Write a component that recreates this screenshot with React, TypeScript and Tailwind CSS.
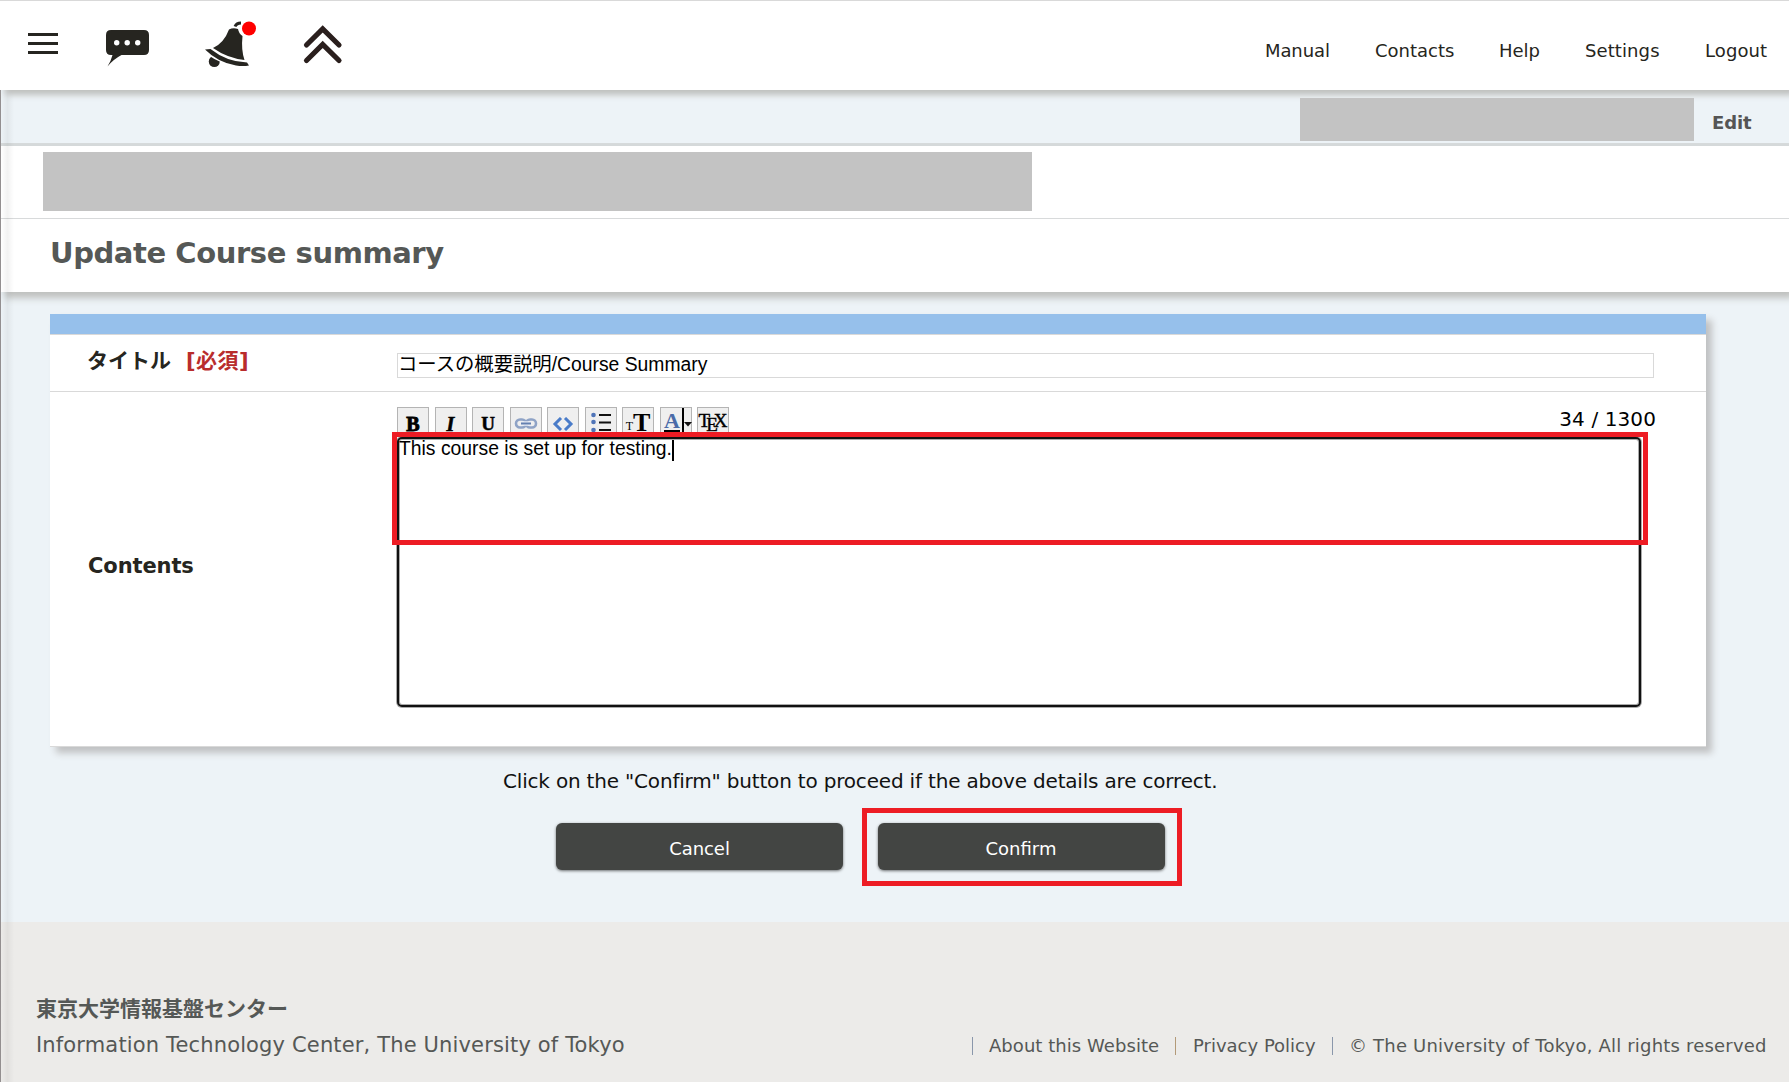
import React from "react";

const nav = [
  { label: "Manual", cls: "w-[65px] mr-[45px] tracking-[-0.1px]" },
  { label: "Contacts", cls: "w-[80px] mr-[44px]" },
  { label: "Help", cls: "w-[40px] mr-[46px]" },
  { label: "Settings", cls: "w-[74px] mr-[46px] tracking-[0.1px]" },
  { label: "Logout", cls: "w-[66px] tracking-[0.1px]" },
];

function ToolButton({ children }: { children: React.ReactNode }) {
  return (
    <button className="relative flex h-[32px] w-[32px] shrink-0 items-start justify-center border border-[#b4b4b4] bg-[#efefef] pt-[4px]">
      {children}
    </button>
  );
}

function Toolbar() {
  const serif = "font-['Liberation_Serif',serif] text-black";
  return (
    <div className="flex gap-[5.5px]">
      <ToolButton>
        <span className={`${serif} text-[20px] leading-[24px] font-bold [-webkit-text-stroke:0.9px_black]`}>B</span>
      </ToolButton>
      <ToolButton>
        <span className={`${serif} text-[20px] leading-[24px] font-bold italic [-webkit-text-stroke:0.6px_black]`}>I</span>
      </ToolButton>
      <ToolButton>
        <span className={`${serif} text-[19px] leading-[24px] font-bold [-webkit-text-stroke:0.5px_black]`}>U</span>
      </ToolButton>
      <ToolButton>
        <svg className="mt-[5px]" width="24" height="14" viewBox="0 0 24 14" fill="none">
          <rect x="2" y="2.5" width="10" height="8" rx="4" stroke="#8fa3c6" strokeWidth="2.6" />
          <rect x="12" y="2.5" width="10" height="8" rx="4" stroke="#8fa3c6" strokeWidth="2.6" />
          <path d="M7 6.5h10" stroke="#e8ecf4" strokeWidth="4.5" />
          <path d="M7 6.5h10" stroke="#6480b0" strokeWidth="2" />
        </svg>
      </ToolButton>
      <ToolButton>
        <svg className="mt-[5px]" width="22" height="14" viewBox="0 0 22 14" fill="none" stroke="#4a7cc9" strokeWidth="3">
          <path d="M9 1L3 7l6 6M13 1l6 6-6 6" />
        </svg>
      </ToolButton>
      <ToolButton>
        <svg width="22" height="22" viewBox="0 0 22 22">
          <g fill="#4f74b8">
            <circle cx="3.5" cy="3" r="2.3" />
            <circle cx="3.5" cy="10" r="2.3" />
            <circle cx="3.5" cy="18" r="2.3" />
          </g>
          <path d="M9 3h12M9 10.500h12M9 18h12" stroke="#111" strokeWidth="1.8" />
        </svg>
      </ToolButton>
      <ToolButton>
        <span className={`${serif} mt-[4px] text-[12px] leading-[20px] text-[#777]`}>T</span>
        <span className={`${serif} text-[26px] leading-[21px] font-bold`}>T</span>
      </ToolButton>
      <ToolButton>
        <span className="mr-[7px] h-[21px] border-b-[3px] border-black font-['Liberation_Serif',serif] text-[22px] leading-[18px] font-bold text-[#4a6ba8]">A</span>
        <span className="absolute top-0 left-[21px] h-full w-[2px] bg-black" />
        <svg className="absolute top-[14px] left-[23px]" width="8" height="5" viewBox="0 0 8 5">
          <path d="M0 0h8L4 4.5z" fill="#111" />
        </svg>
      </ToolButton>
      <ToolButton>
        <span className={`${serif} flex text-[19px] leading-[18px]`}>
          <span className="[-webkit-text-stroke:0.4px_black]">T</span>
          <span className="relative top-[4px] -ml-[4px] [-webkit-text-stroke:0.4px_black]">E</span>
          <span className="-ml-[4px] [-webkit-text-stroke:0.4px_black]">X</span>
        </span>
      </ToolButton>
    </div>
  );
}

function Header() {
  return (
    <header className="relative z-20 flex h-[90px] shrink-0 items-start border-t border-[#d9d9d9] bg-white shadow-[5px_5px_6px_0_#bfc0be]">
      <div className="mt-[32px] ml-[28px] flex h-[21px] w-[30px] flex-col justify-between">
        <span className="h-[3px] bg-[#262520]" />
        <span className="h-[3px] bg-[#262520]" />
        <span className="h-[3px] bg-[#262520]" />
      </div>
      <svg className="mt-[29px] ml-[48px]" width="43" height="37" viewBox="0 0 43 37">
        <path d="M5 0h33q5 0 5 5v15q0 5-5 5H15.500Q7 29.500 1.500 36.500Q5 31 6.500 25H5q-5 0-5-5V5q0-5 5-5z" fill="#262520" />
        <g fill="#fff">
          <circle cx="10.700" cy="12.700" r="2.700" />
          <circle cx="21.200" cy="12.700" r="2.700" />
          <circle cx="31.700" cy="12.700" r="2.700" />
        </g>
      </svg>
      <svg className="mt-[20px] ml-[56px]" width="52" height="48" viewBox="0 0 52 48">
        <circle cx="9.300" cy="40.500" r="5.500" fill="#262520" />
        <path d="M1 30.500Q20 44.500 42 46" stroke="#fff" strokeWidth="3.500" fill="none" />
        <g fill="#262520">
          <path d="M24 8.500Q28 6.500 33 8Q34 13 37.500 15Q36 29 39.500 39Q22 37 8 27Q19 22 24 8.500z" />
          <path d="M0 28.500L5.500 28Q22 41 42 41.500L44 44.500Q38 45.500 31 44.500Q13 41.500 0 28.500z" />
        </g>
        <path d="M30 5.500Q31.500 2 36 2" stroke="#262520" strokeWidth="3" fill="none" />
        <circle cx="44" cy="7.500" r="7" fill="#f00" />
      </svg>
      <svg className="mt-[24px] ml-[45px]" width="41" height="40" viewBox="0 0 41 40" fill="none">
        <path className="blur-[0.7px]" d="M4.500 20L20.700 4L37 20M4.500 35.500L20.700 19.500L37 35.500" stroke="#2a1f1d" strokeWidth="5.200" strokeLinecap="round" />
      </svg>
      <nav className="mt-[38px] mr-[18px] ml-auto flex text-[18px] leading-[24px] text-[#262520]">
        {nav.map((n) => (
          <a key={n.label} className={`whitespace-nowrap ${n.cls}`}>{n.label}</a>
        ))}
      </nav>
    </header>
  );
}

export default function App() {
  return (
    <div className="relative flex h-[1082px] w-[1789px] flex-col overflow-hidden bg-[#edf3f7] font-['DejaVu_Sans','Noto_Sans_CJK_JP',sans-serif]">
      <Header />
      <div className="relative flex h-[56px] shrink-0 items-start border-b-[3px] border-[#d6dadb]">
        <div className="relative z-30 mt-[8px] ml-[1300px] h-[43px] w-[394px] bg-[#c3c3c3]" />
        <span className="mt-[21px] ml-[18px] text-[18px] leading-[24px] font-bold tracking-[-0.1px] text-[#555]">Edit</span>
      </div>
      <div className="relative z-10 shrink-0 shadow-[5px_6px_7px_0_#bfc0be]">
        <div className="h-[73px] border-b border-[#d8dadb] bg-white pt-[6px] pl-[43px]">
          <div className="h-[59px] w-[989px] bg-[#c3c3c3]" />
        </div>
        <h1 className="h-[73px] bg-white pt-[15px] pl-[50px] text-[29px] leading-[38px] font-bold tracking-[-0.42px] text-[#555856]">Update Course summary</h1>
      </div>

      <section className="mt-[22px] ml-[50px] h-[433px] w-[1656px] shrink-0 border-b border-[#d9d9d9] bg-white shadow-[6px_6px_7px_0_#c0c1c2]">
        <div className="h-[21px] border-b border-[#d9d9d9] bg-[#96c0eb]" />
        <div className="flex h-[57px] border-b border-[#d9d9d9]">
          <div className="w-[347px] pt-[11px] pl-[37px] text-[21px] leading-[30px] font-bold text-[#262520]">
            <span>タイトル</span>
            <span className="ml-[15px] tracking-[0.5px] text-[#b92c2c]">[必須]</span>
          </div>
          <div className="mt-[18px] h-[25px] w-[1257px] border border-[#d9d9d9] font-['Liberation_Sans','Noto_Sans_CJK_JP',sans-serif] text-[19.33px] leading-[21px] text-black">
            コースの概要説明/Course Summary
          </div>
        </div>
        <div className="flex">
          <div className="w-[347px] pt-[160px] pl-[38px] text-[21px] leading-[28px] font-bold tracking-[-0.1px] text-[#262520]">Contents</div>
          <div className="relative w-[1259px] pt-[15px]">
            <div className="flex h-[30px] justify-between overflow-hidden">
              <Toolbar />
              <span className="text-[20px] leading-[24px] tracking-[0.1px] text-black">34 / 1300</span>
            </div>
            <div className="flex h-[270px] w-[1244px] items-start rounded-[5px] border-2 border-[#111] bg-white font-['Liberation_Sans',sans-serif] text-[19.33px] leading-[20px] text-black shadow-[0_0_0_1px_#aaa,inset_0_0_0_1px_#aaa]">
              <span>This course is set up for testing.</span>
              <span className="mt-px h-[21px] w-[2px] bg-black" />
            </div>
            <div className="absolute top-[40px] -left-[5px] h-[113px] w-[1256px] border-[5px] border-[#ed1c24]" />
          </div>
        </div>
      </section>

      <p className="mt-[20px] ml-[503px] shrink-0 text-[20px] leading-[28px] tracking-[-0.185px] whitespace-nowrap text-[#111]">
        Click on the "Confirm" button to proceed if the above details are correct.
      </p>
      <div className="mt-[13px] ml-[556px] flex h-[78px] shrink-0 items-start text-[18px] text-white">
        <button className="mt-[15px] h-[47px] w-[287px] rounded-[6px] bg-[#434543] pt-[4px] tracking-[-0.05px] shadow-[0_1px_3px_rgba(0,0,0,0.55)]">Cancel</button>
        <div className="ml-[19px] flex h-[78px] w-[320px] items-start border-[5px] border-[#ed1c24] pt-[10px] pl-[10.5px]">
          <button className="h-[47px] w-[287px] rounded-[6px] bg-[#434543] pt-[4px] shadow-[0_1px_3px_rgba(0,0,0,0.55)]">Confirm</button>
        </div>
      </div>

      <footer className="mt-auto flex h-[160px] shrink-0 items-start justify-between bg-[#ecebe9] pl-[36px] text-[#555856]">
        <div className="pt-[71px]">
          <div className="text-[21px] leading-[32px] font-bold">東京大学情報基盤センター</div>
          <div className="pt-[4px] text-[21px] leading-[32px] tracking-[0.15px]">Information Technology Center, The University of Tokyo</div>
        </div>
        <div className="mt-[112px] mr-[23px] flex items-center text-[18px] leading-[24px] whitespace-nowrap">
          <span className="h-[18px] w-px bg-[#8a97ab]" />
          <span className="ml-[16px] w-[170px] tracking-[0.05px]">About this Website</span>
          <span className="ml-[16px] h-[18px] w-px bg-[#b39a78]" />
          <span className="ml-[17px] w-[122px]">Privacy Policy</span>
          <span className="ml-[17px] h-[18px] w-px bg-[#8a97ab]" />
          <span className="ml-[16px] w-[417px] tracking-[0.19px]">© The University of Tokyo, All rights reserved</span>
        </div>
      </footer>

      <div className="pointer-events-none absolute top-[90px] bottom-0 left-0 z-10 w-[14px] border-l border-[#938f90] bg-linear-to-r from-black/0 via-black/5 to-black/0" />
    </div>
  );
}
